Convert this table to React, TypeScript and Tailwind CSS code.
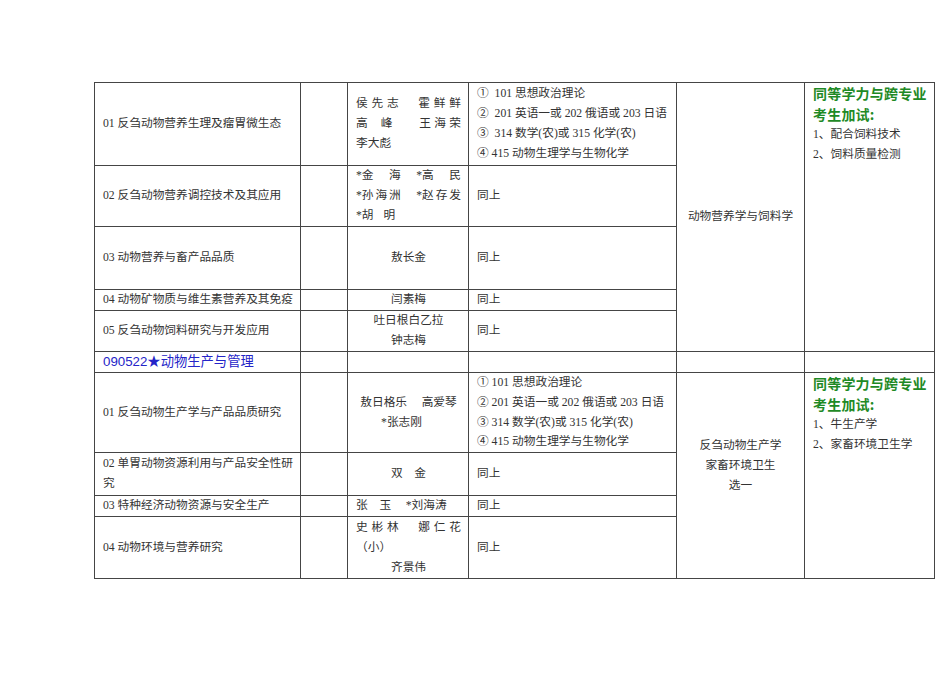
import * as React from "react";

// ── Shared cell styles ──────────────────────────────────────────

const cell = "border border-[#454545] px-[8px] py-0 align-middle";
const names = "border border-[#454545] pl-[8px] pr-[7px] py-0 align-middle";

const EXAMS_A = [
  "①\u00a0 101 思想政治理论",
  "②\u00a0 201 英语一或 202 俄语或 203 日语",
  "③\u00a0 314 数学(农)或 315 化学(农)",
  "④ 415 动物生理学与生物化学",
];

const EXAMS_B = [
  "① 101 思想政治理论",
  "② 201 英语一或 202 俄语或 203 日语",
  "③ 314 数学(农)或 315 化学(农)",
  "④ 415 动物生理学与生物化学",
];

// Justified line: each piece spread across the cell width
function Spread({ items }: { items: string[] }) {
  return (
    <div className="flex justify-between">
      {items.map((t, i) => (
        <span key={i}>{t}</span>
      ))}
    </div>
  );
}

function Lines({ lines, tight }: { lines: string[]; tight?: boolean }) {
  return (
    <div className={tight ? "whitespace-nowrap leading-[19.7px]" : "whitespace-nowrap"}>
      {lines.map((l, i) => (
        <div key={i}>{l}</div>
      ))}
    </div>
  );
}

function Extra({ items, span }: { items: string[]; span: number }) {
  return (
    <td className={`${cell} align-top pt-[0px]`} rowSpan={span}>
      <div className="whitespace-nowrap font-['Noto_Sans_CJK_SC',sans-serif] font-bold text-[14px] tracking-[0.2px] text-[#1f8a26] leading-[21px]">
        同等学力与跨专业
        <br />
        考生加试:
      </div>
      {items.map((t, i) => (
        <div key={i} className="whitespace-nowrap">
          {t}
        </div>
      ))}
    </td>
  );
}

export default function App() {
  return (
    <div className="min-h-[673px] bg-white pt-[82px] pl-[94px]">
      <table className="table-fixed border-collapse w-[840px] text-[11.7px] leading-[20px] text-[#333] font-['Liberation_Serif','Noto_Sans_CJK_SC',serif]">
        <colgroup>
          <col className="w-[206px]" />
          <col className="w-[47px]" />
          <col className="w-[121px]" />
          <col className="w-[208px]" />
          <col className="w-[128px]" />
          <col className="w-[130px]" />
        </colgroup>
        <tbody>
          {/* ── 动物营养学与饲料学 block ── */}
          <tr className="h-[83px]">
            <td className={`${cell} whitespace-nowrap`}>01 反刍动物营养生理及瘤胃微生态</td>
            <td className={cell}></td>
            <td className={names}>
              <Spread items={["侯", "先", "志", "　", "霍", "鲜", "鲜"]} />
              <div className="flex">
                <span>高</span>
                <span className="ml-[13px]">峰</span>
                <span className="ml-auto mr-[-3.4px] tracking-[3.4px]">王海荣</span>
              </div>
              <div>李大彪</div>
            </td>
            <td className={cell}>
              <Lines lines={EXAMS_A} />
            </td>
            <td className={`${cell} text-center`} rowSpan={5}>
              动物营养学与饲料学
            </td>
            <Extra span={5} items={["1、配合饲料技术", "2、饲料质量检测"]} />
          </tr>
          <tr className="h-[61px]">
            <td className={`${cell} whitespace-nowrap`}>02 反刍动物营养调控技术及其应用</td>
            <td className={cell}></td>
            <td className={names}>
              <Spread items={["*金", "海", "*高", "民"]} />
              <Spread items={["*孙", "海", "洲", "　", "*赵", "存", "发"]} />
              <div className="flex">
                <span>*胡</span>
                <span className="ml-[10px]">明</span>
              </div>
            </td>
            <td className={cell}>同上</td>
          </tr>
          <tr className="h-[63px]">
            <td className={`${cell} whitespace-nowrap`}>03 动物营养与畜产品品质</td>
            <td className={cell}></td>
            <td className={`${names} text-center`}>敖长金</td>
            <td className={cell}>同上</td>
          </tr>
          <tr className="h-[21px]">
            <td className={`${cell} whitespace-nowrap`}>04 动物矿物质与维生素营养及其免疫</td>
            <td className={cell}></td>
            <td className={`${names} text-center`}>闫素梅</td>
            <td className={cell}>同上</td>
          </tr>
          <tr className="h-[41px]">
            <td className={`${cell} whitespace-nowrap`}>05 反刍动物饲料研究与开发应用</td>
            <td className={cell}></td>
            <td className={`${names} text-center`}>
              吐日根白乙拉
              <br />
              钟志梅
            </td>
            <td className={cell}>同上</td>
          </tr>

          {/* ── 090522 header row ── */}
          <tr className="h-[21px]">
            <td className={`${cell} whitespace-nowrap font-['Liberation_Sans','Noto_Sans_CJK_SC',sans-serif] text-[13.3px] leading-[20px] text-[#2424c8]`}>
              090522★动物生产与管理
            </td>
            <td className={cell}></td>
            <td className={cell}></td>
            <td className={cell}></td>
            <td className={cell}></td>
            <td className={cell}></td>
          </tr>

          {/* ── 动物生产与管理 block ── */}
          <tr className="h-[80px]">
            <td className={`${cell} whitespace-nowrap`}>01 反刍动物生产学与产品品质研究</td>
            <td className={cell}></td>
            <td className={`${names} text-center whitespace-nowrap`}>
              <div>敖日格乐　 高爱琴</div>
              <div className="mr-[14px]">*张志刚</div>
            </td>
            <td className={cell}>
              <Lines lines={EXAMS_B} tight />
            </td>
            <td className={`${cell} text-center`} rowSpan={4}>
              反刍动物生产学
              <br />
              家畜环境卫生
              <br />
              选一
              <br />
              &nbsp;
            </td>
            <Extra span={4} items={["1、牛生产学", "2、家畜环境卫生学"]} />
          </tr>
          <tr className="h-[43px]">
            <td className={`${cell} whitespace-nowrap`}>
              02 单胃动物资源利用与产品安全性研
              <br />
              究
            </td>
            <td className={cell}></td>
            <td className={`${names} text-center`}>双　金</td>
            <td className={cell}>同上</td>
          </tr>
          <tr className="h-[21px]">
            <td className={`${cell} whitespace-nowrap`}>03 特种经济动物资源与安全生产</td>
            <td className={cell}></td>
            <td className={`${names} whitespace-nowrap`}>张　玉　 *刘海涛</td>
            <td className={cell}>同上</td>
          </tr>
          <tr className="h-[62px]">
            <td className={`${cell} whitespace-nowrap`}>04 动物环境与营养研究</td>
            <td className={cell}></td>
            <td className={names}>
              <Spread items={["史", "彬", "林", "　", "娜", "仁", "花"]} />
              <div>（小）</div>
              <div className="text-center">齐景伟</div>
            </td>
            <td className={cell}>同上</td>
          </tr>
        </tbody>
      </table>
    </div>
  );
}
